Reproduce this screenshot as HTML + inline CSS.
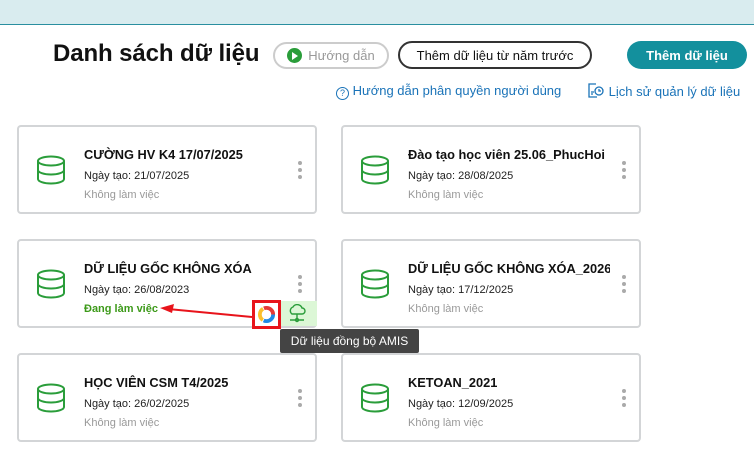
<!DOCTYPE html>
<html><head><meta charset="utf-8"><style>
*{margin:0;padding:0;box-sizing:border-box}
body{width:754px;height:457px;background:#fff;font-family:"Liberation Sans","Noto Sans CJK SC",sans-serif;position:relative;overflow:hidden;color:#111}
.top{position:absolute;left:0;top:0;width:754px;height:25px;background:#d9ecef;border-bottom:1px solid #2a8fa0}
.abs{position:absolute}
.title{left:53px;top:40px;font-size:24px;font-weight:bold;letter-spacing:-0.1px}
.btn{position:absolute;border-radius:14px;font-size:13px;display:flex;align-items:center;justify-content:center}
.card{position:absolute;width:300px;height:89px;border:2px solid #d3d5d7;border-radius:4px;background:#fff}
.card .ic{position:absolute;left:17px;top:28px}
.card .n{position:absolute;left:65px;top:20px;font-size:12.8px;font-weight:bold;color:#111;white-space:nowrap;overflow:hidden;max-width:202px}
.card .d{position:absolute;left:65px;top:43px;font-size:11px;color:#222}
.card .s{position:absolute;left:65px;top:62px;font-size:11px;color:#999}
.card .dots{position:absolute;left:279px;top:34px;width:4px}
.card .dots i{display:block;width:4px;height:4px;border-radius:2px;background:#aaa;margin-bottom:3px}
.link{font-size:13px;color:#1a73b8}
</style></head><body>
<div class="top"></div>
<div class="abs title">Danh sách dữ liệu</div>
<div class="btn" style="left:273px;top:42px;width:116px;height:27px;border:2px solid #ccc;color:#999"><span style="display:inline-block;width:15px;height:15px;border-radius:50%;background:#2a9d3a;margin-right:6px;position:relative"><span style="position:absolute;left:5px;top:3.5px;border-left:6px solid #fff;border-top:4px solid transparent;border-bottom:4px solid transparent"></span></span>Hướng dẫn</div>
<div class="btn" style="left:398px;top:41px;width:194px;height:28px;border:2px solid #333;color:#111">Thêm dữ liệu từ năm trước</div>
<div class="btn" style="left:627px;top:41px;width:120px;height:28px;background:#13909d;color:#fff;font-weight:bold">Thêm dữ liệu</div>
<div class="abs link" style="left:336px;top:83px"><span style="display:inline-block;width:13px;height:13px;border:1px solid #1a73b8;border-radius:50%;font-size:9px;text-align:center;line-height:11px;vertical-align:-1px">?</span> Hướng dẫn phân quyền người dùng</div>
<div class="abs link" style="left:587px;top:83px"><svg width="18" height="15" viewBox="0 0 18 15" style="vertical-align:-2px" fill="none" stroke="#1a73b8" stroke-width="1.3"><path d="M9 1H2v13h8M4 9h3M4 11h2"/><circle cx="12" cy="8" r="4"/><path d="M12 6v2h2"/></svg> Lịch sử quản lý dữ liệu</div>

<div class="card" style="left:17px;top:125px">
<svg class="ic" width="30" height="30" viewBox="0 0 30 30" fill="none" stroke="#2a9d3a" stroke-width="2"><ellipse cx="15" cy="6" rx="13" ry="4.5"/><path d="M2 6v18c0 2.5 6 4.5 13 4.5s13-2 13-4.5V6M2 15c0 2.5 6 4.5 13 4.5s13-2 13-4.5"/></svg>
<div class="n">CƯỜNG HV K4 17/07/2025</div><div class="d">Ngày tạo: 21/07/2025</div><div class="s">Không làm việc</div><div class="dots"><i></i><i></i><i></i></div></div>
<div class="card" style="left:341px;top:125px">
<svg class="ic" width="30" height="30" viewBox="0 0 30 30" fill="none" stroke="#2a9d3a" stroke-width="2"><ellipse cx="15" cy="6" rx="13" ry="4.5"/><path d="M2 6v18c0 2.5 6 4.5 13 4.5s13-2 13-4.5V6M2 15c0 2.5 6 4.5 13 4.5s13-2 13-4.5"/></svg>
<div class="n">Đào tạo học viên 25.06_PhucHoi</div><div class="d">Ngày tạo: 28/08/2025</div><div class="s">Không làm việc</div><div class="dots"><i></i><i></i><i></i></div></div>
<div class="card" style="left:17px;top:239px">
<svg class="ic" width="30" height="30" viewBox="0 0 30 30" fill="none" stroke="#2a9d3a" stroke-width="2"><ellipse cx="15" cy="6" rx="13" ry="4.5"/><path d="M2 6v18c0 2.5 6 4.5 13 4.5s13-2 13-4.5V6M2 15c0 2.5 6 4.5 13 4.5s13-2 13-4.5"/></svg>
<div class="n">DỮ LIỆU GỐC KHÔNG XÓA</div><div class="d">Ngày tạo: 26/08/2023</div><div class="s" style="color:#3d9a1a;font-weight:bold">Đang làm việc</div><div class="dots"><i></i><i></i><i></i></div>
<div style="position:absolute;left:262px;top:60px;width:36px;height:25px;background:#dcf7d6"></div></div>
<div class="card" style="left:341px;top:239px">
<svg class="ic" width="30" height="30" viewBox="0 0 30 30" fill="none" stroke="#2a9d3a" stroke-width="2"><ellipse cx="15" cy="6" rx="13" ry="4.5"/><path d="M2 6v18c0 2.5 6 4.5 13 4.5s13-2 13-4.5V6M2 15c0 2.5 6 4.5 13 4.5s13-2 13-4.5"/></svg>
<div class="n">DỮ LIỆU GỐC KHÔNG XÓA_2026</div><div class="d">Ngày tạo: 17/12/2025</div><div class="s">Không làm việc</div><div class="dots"><i></i><i></i><i></i></div></div>
<div class="card" style="left:17px;top:353px">
<svg class="ic" width="30" height="30" viewBox="0 0 30 30" fill="none" stroke="#2a9d3a" stroke-width="2"><ellipse cx="15" cy="6" rx="13" ry="4.5"/><path d="M2 6v18c0 2.5 6 4.5 13 4.5s13-2 13-4.5V6M2 15c0 2.5 6 4.5 13 4.5s13-2 13-4.5"/></svg>
<div class="n">HỌC VIÊN CSM T4/2025</div><div class="d">Ngày tạo: 26/02/2025</div><div class="s">Không làm việc</div><div class="dots"><i></i><i></i><i></i></div></div>
<div class="card" style="left:341px;top:353px">
<svg class="ic" width="30" height="30" viewBox="0 0 30 30" fill="none" stroke="#2a9d3a" stroke-width="2"><ellipse cx="15" cy="6" rx="13" ry="4.5"/><path d="M2 6v18c0 2.5 6 4.5 13 4.5s13-2 13-4.5V6M2 15c0 2.5 6 4.5 13 4.5s13-2 13-4.5"/></svg>
<div class="n">KETOAN_2021</div><div class="d">Ngày tạo: 12/09/2025</div><div class="s">Không làm việc</div><div class="dots"><i></i><i></i><i></i></div></div>

<svg class="abs" style="left:286px;top:304px" width="22" height="20" viewBox="0 0 22 20" fill="none" stroke="#2a9d3a" stroke-width="1.4"><path d="M6 10a4 4 0 0 1 1-7 5 5 0 0 1 9 1 3 3 0 0 1 0 6H6zM11 10v5M4 16h14"/><circle cx="11" cy="16" r="1.5"/></svg>
<div class="abs" style="left:252px;top:300px;width:29px;height:29px;border:3px solid #e8141b;background:#fff"></div>
<svg class="abs" style="left:257px;top:305px" width="19" height="19" viewBox="0 0 20 20"><circle cx="10" cy="10" r="7" fill="none" stroke="#1e88e5" stroke-width="4" stroke-dasharray="14 30"/><circle cx="10" cy="10" r="7" fill="none" stroke="#fbc02d" stroke-width="4" stroke-dasharray="0 15 14 30"/><circle cx="10" cy="10" r="7" fill="none" stroke="#e53935" stroke-width="4" stroke-dasharray="0 30 14 30"/></svg>
<svg class="abs" style="left:158px;top:300px" width="96" height="20"><line x1="10" y1="9" x2="94" y2="17" stroke="#e8141b" stroke-width="2"/><path d="M2 8l14-4-2 9z" fill="#e8141b"/></svg>
<div class="abs" style="left:280px;top:329px;width:139px;height:24px;background:#444;color:#fff;font-size:12px;line-height:24px;text-align:center;border-radius:2px">Dữ liệu đồng bộ AMIS</div>
</body></html>
